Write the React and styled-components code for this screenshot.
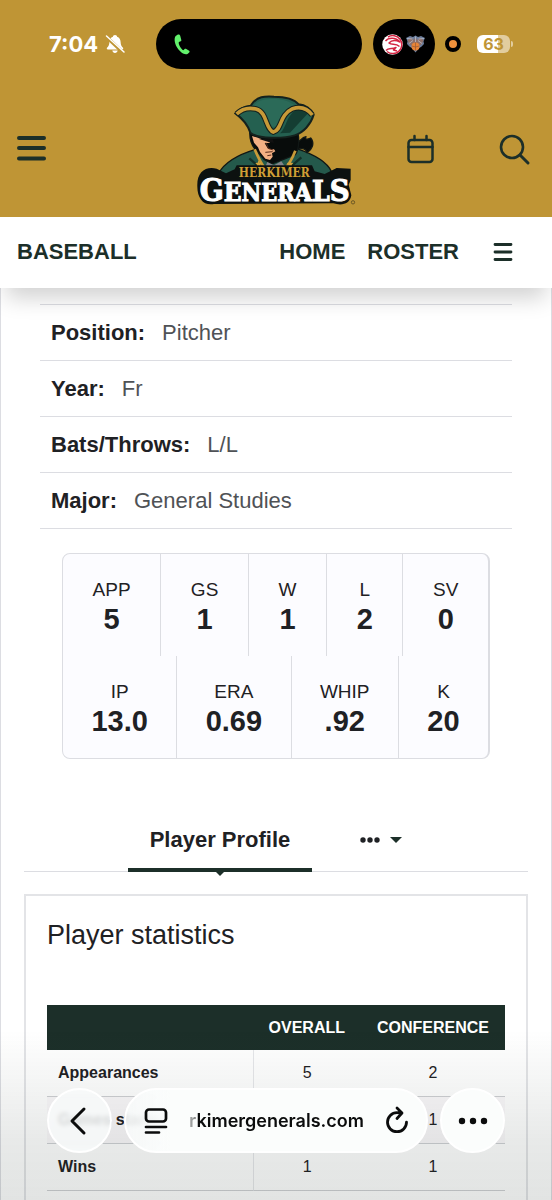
import React from "react";
import styled, { createGlobalStyle } from "styled-components";

const gold = "#bf9535";
const forest = "#1c2f29";
const line = "#dcdde2";
const ink = "#1f2124";

const GlobalStyle = createGlobalStyle`
  * { box-sizing: border-box; }
  body {
    margin: 0;
    background: #fff;
    color: ${ink};
    font-family: "Liberation Sans", Arial, sans-serif;
  }
  button, input { font: inherit; color: inherit; border: 0; background: none; padding: 0; }
  button { cursor: pointer; }
  a { color: inherit; text-decoration: none; }
  svg { display: block; overflow: visible; }
`;

const Page = styled.div`
  display: flex;
  flex-direction: column;
  min-height: 100vh;
`;

/* ---------- phone status bar ---------- */

const StatusBar = styled.div`
  display: flex;
  align-items: center;
  height: 50px;
  padding: 0 39px 0 49px;
  color: #fff;
  font-family: Inter, "Liberation Sans", sans-serif;
`;

const Clock = styled.div`
  flex: 1;
  display: flex;
  align-items: center;
  gap: 7px;
  font-size: 22px;
  font-weight: 700;
`;

const Island = styled.div`
  display: flex;
  align-items: center;
  justify-content: ${(p) => (p.$center ? "center" : "flex-start")};
  gap: 2px;
  width: ${(p) => p.$width}px;
  height: 50px;
  margin-right: ${(p) => p.$after}px;
  padding: ${(p) => (p.$center ? "0" : "0 18px")};
  border-radius: 25px;
  background: #000;
`;

const MicDot = styled.div`
  width: 16px;
  height: 16px;
  margin-right: 16px;
  border: 4px solid #000;
  border-radius: 50%;
  background: #f0913c;
`;

const Battery = styled.div`
  display: flex;
  align-items: center;
  gap: 1px;
`;

const BatteryBody = styled.div`
  width: 33px;
  height: 18px;
  border-radius: 6px;
  background: linear-gradient(90deg, #fff 63%, #e2cd9e 63%);
  color: ${gold};
  font-size: 16px;
  font-weight: 700;
  line-height: 18px;
  text-align: center;
`;

const BatteryTip = styled.div`
  width: 2px;
  height: 6px;
  border-radius: 0 2px 2px 0;
  background: #e2cd9e;
`;

/* ---------- site header ---------- */

const SiteHeader = styled.header`
  padding: 19px 0 11px;
  background: ${gold};
`;

const HeaderRow = styled.div`
  display: grid;
  grid-template-columns: 1fr auto 1fr;
  align-items: center;
  margin-top: 25px;
  padding: 0 15px;
`;

const HeaderActions = styled.div`
  display: flex;
  justify-content: flex-end;
  gap: 63px;
`;

const IconButton = styled.button`
  display: flex;
  justify-self: start;
  color: ${forest};
`;

const SportNav = styled.nav`
  position: relative;
  z-index: 1;
  display: flex;
  align-items: center;
  height: 71px;
  padding: 0 39px 2px 17px;
  background: #fff;
  box-shadow: 0 16px 22px -6px rgba(0, 0, 0, 0.18);
  color: ${forest};
  font-size: 22px;
  font-weight: 700;
`;

const NavLink = styled.a`
  margin-right: ${(p) => (p.$push ? "auto" : "22px")};
`;

const NavMore = styled(IconButton)`
  margin-left: 12px;
`;

/* ---------- player bio ---------- */

const Main = styled.main`
  flex: 1;
  display: flex;
  flex-direction: column;
  padding: 16px 23px 0;
  border: solid ${line};
  border-width: 0 1px;
`;

const Bio = styled.dl`
  margin: 0 16px;
  border-top: 1px solid ${line};
`;

const BioRow = styled.div`
  display: flex;
  align-items: center;
  gap: 17px;
  height: 56px;
  padding: 0 11px;
  border-bottom: 1px solid ${line};
  font-size: 22px;
`;

const BioLabel = styled.dt`
  font-weight: 700;
`;

const BioValue = styled.dd`
  margin: 0;
  color: #4f5256;
`;

const StatBox = styled.section`
  margin: 24px 38px 0;
  border: 1px solid ${line};
  border-right-width: 2px;
  border-radius: 8px;
  background: #fcfcff;
  overflow: hidden;
`;

const StatRow = styled.div`
  display: flex;
`;

const StatCell = styled.div`
  flex: 1 1 auto;
  height: 102px;
  padding: 24px 28px 0;
  text-align: center;
  & + & { border-left: 1px solid ${line}; }
`;

const StatLabel = styled.div`
  font-size: 19px;
  line-height: 24px;
`;

const StatValue = styled.div`
  font-size: 29px;
  font-weight: 700;
  line-height: 34px;
`;

/* ---------- tabs ---------- */

const Tabs = styled.div`
  display: flex;
  justify-content: center;
  gap: 26px;
  margin-top: 49px;
  border-bottom: 1px solid ${line};
`;

const Tab = styled.button`
  position: relative;
  display: flex;
  align-items: center;
  gap: 10px;
  height: 64px;
  margin-bottom: -1px;
  padding: 4px 22px 0;
  border-bottom: 4px solid ${(p) => (p.$active ? forest : "transparent")};
  font-size: 22px;
  font-weight: 700;
  white-space: nowrap;

  &::after {
    content: "";
    display: ${(p) => (p.$active ? "block" : "none")};
    position: absolute;
    top: 100%;
    left: 50%;
    margin: 3px 0 0 -5px;
    border: 5px solid transparent;
    border-top-color: ${forest};
    border-bottom-width: 0;
  }
`;

/* ---------- statistics ---------- */

const Panel = styled.section`
  flex: 1;
  margin-top: 22px;
  padding: 21px 21px 0;
  border: 2px solid #e3e4e7;
  border-bottom: 0;
`;

const PanelTitle = styled.h2`
  margin: 0 0 52px;
  font-size: 27px;
  font-weight: 400;
  line-height: 36px;
`;

const StatsTable = styled.table`
  width: 100%;
  border-collapse: separate;
  border-spacing: 0;
  font-size: 16px;

  th, td { height: 47px; padding: 0; border-bottom: 1px solid #cfd1d4; text-align: center; }
  td { border-left: 1px solid #e6e7ea; }
  td + td { border-left: 0; }
  tbody th { padding-left: 11px; text-align: left; white-space: nowrap; }
  tbody tr:nth-child(even) { background: #fbf9fb; }
  thead td, thead th {
    height: 45px;
    padding: 0 16px;
    border: 0;
    background: ${forest};
    color: #fff;
  }
  thead td { width: 100%; }
`;

/* ---------- browser toolbar ---------- */

const BottomShade = styled.div`
  position: fixed;
  inset: auto 0 0;
  z-index: 2;
  height: 170px;
  background: linear-gradient(rgba(30, 45, 38, 0), rgba(30, 45, 38, 0.1) 65%, rgba(30, 45, 38, 0.13));
  pointer-events: none;
`;

const BrowserBar = styled.div`
  position: fixed;
  inset: auto 0 47px;
  z-index: 3;
  display: flex;
  gap: 12px;
  padding: 0 47px;
  color: #0b0c0c;
`;

const RoundButton = styled.button`
  flex: none;
  display: flex;
  align-items: center;
  justify-content: center;
  width: 65px;
  height: 65px;
  border: 2px solid #fff;
  border-radius: 50%;
  background: ${(p) => (p.$clear ? "rgba(248, 250, 250, 0.84)" : "#fbfdfc")};
  backdrop-filter: blur(2px);
`;

const AddressPill = styled.div`
  flex: 1;
  min-width: 0;
  display: flex;
  align-items: center;
  gap: 20px;
  height: 65px;
  padding: 0 17px 0 18px;
  border: 2px solid #fff;
  border-radius: 33px;
  background: linear-gradient(90deg, rgba(248, 250, 250, 0.88), #fbfdfc 44px);
  backdrop-filter: blur(2px);
`;

const PillButton = styled.button`
  flex: none;
  display: flex;
`;

const AddressInput = styled.input`
  flex: 1;
  min-width: 0;
  height: 32px;
  outline: 0;
  font-family: Inter, "Liberation Sans", sans-serif;
  font-size: 18px;
  font-weight: 600;
  text-align: center;
  mask-image: linear-gradient(90deg, rgba(0, 0, 0, 0.3), rgba(0, 0, 0, 0.5) 8px, #000 10px);
`;

/* ---------- drawings ---------- */

const MutedBell = () => (
  <svg width="20" height="20" viewBox="0 0 20 20" fill="#fff" aria-hidden="true">
    <path d="M10 1C8.700 1 8 1.800 7.900 2.700C5.600 3.500 4.500 5.500 4.400 8C4.300 11 3.500 12.200 2 13.800C1.500 14.500 1.800 15.500 2.800 15.500H17.200C18.200 15.500 18.500 14.500 18 13.800C16.500 12.200 15.700 11 15.600 8C15.500 5.500 14.400 3.500 12.100 2.700C12 1.800 11.300 1 10 1Z" />
    <path d="M7.300 16.500h5.400c-.3 1.600-1.300 2.500-2.700 2.500s-2.400-.9-2.700-2.500Z" />
    <path d="M1.500 3 18 18.500" stroke={gold} strokeWidth="3.400" />
    <path d="M1.500 2 19 18" stroke="#fff" strokeWidth="1.500" strokeLinecap="round" />
  </svg>
);

const Phone = () => (
  <svg width="16" height="21" viewBox="0 0 16 21" fill="#62f16c" aria-hidden="true">
    <path d="M3.500.8 1.700 2C-.5 4.500 1 10.500 3.600 14.300C6.300 18.200 10.300 21.200 13.500 19.900L15.200 18.500C15.800 17.900 15.700 17.300 15.200 16.800L12.300 14.900C11.600 14.500 11.100 14.600 10.600 15.100L9.700 16C9.200 16.400 8.400 16 7.100 14.300C5.600 12.300 4.700 10.100 4.700 8.800C4.700 8.200 5 8 5.500 7.800L6.600 7.300C7.300 7 7.400 6.500 7.300 5.900L6.200 1.700C5.900.7 4.500.1 3.500.8Z" />
  </svg>
);

const HawksLogo = () => (
  <svg width="21" height="21" viewBox="0 0 42 42" aria-hidden="true">
    <circle cx="21" cy="21" r="20.500" fill="#fff" />
    <path d="M12 6A18 18 0 1 1 10 35" fill="none" stroke="#d32442" strokeWidth="3" />
    <path d="M7 14C13 7 27 6 36 16C28 12 19 12 14 18C19 23 27 18 35 25" fill="none" stroke="#d32442" strokeWidth="3" strokeLinejoin="round" />
    <path d="M8 33C13 27 20 31 28 27L23 32 30 34" fill="none" stroke="#d32442" strokeWidth="3" strokeLinejoin="round" />
  </svg>
);

const KnicksLogo = () => (
  <svg width="21" height="20" viewBox="0 0 42 40" aria-hidden="true">
    <path d="M2 8 10 4 16 6 21 3 26 6 32 4 40 8 37 14 38 20 32 26 28 28 21 37 14 28 10 26 4 20 5 14Z" fill="#6d7f9e" />
    <path d="M5 12 12 7 17 12 21 7 25 12 30 7 37 12 33 21 28 23 25 18H17L14 23 9 21Z" fill="#8d6f68" />
    <path d="M4 9 15 10M27 10 38 9M8 19 16 13M34 19 26 13M21 5V16" stroke="#b9c3d3" strokeWidth="1.500" />
    <circle cx="21" cy="25" r="8" fill="#e88435" />
    <path d="M21 17V33M13.500 24Q21 28 28.500 24" fill="none" stroke="#8c5236" strokeWidth="1.200" />
  </svg>
);

const GeneralsLogo = () => (
  <svg width="160" height="112" viewBox="18 12 480 336" role="img" aria-label="Herkimer Generals">
    <g stroke="#101715" strokeWidth="4" strokeLinejoin="round">
      <path d="M86 250C104 216 150 192 197 178L320 176C362 190 408 210 424 244L420 290H86Z" fill="#24594b" />
      <path d="M318 160C332 154 334 142 348 140C344 148 350 150 362 144C372 156 372 174 350 188C350 176 336 172 320 180Z" fill="#080c0b" />
      <path d="M180 118 318 116C330 136 328 176 316 194L286 206 246 222 222 208 194 176C180 158 178 138 180 118Z" fill="#080c0b" />
    </g>
    <path d="M186 138 206 144 220 149 238 152 240 158 224 160 234 176 252 178 256 184 246 190 248 200 240 210 226 206 210 186 204 172 192 158Z" fill="#f3b184" />
    <path d="M205 146 248 148 252 158 238 157 226 153Z" fill="#111" />
    <path d="M228 158 236 176 250 180M226 187 248 185M232 197 244 195" fill="none" stroke="#5a2c1b" strokeWidth="3" />
    <path d="M194 178C206 206 212 220 228 240M316 182C306 208 298 222 282 240" fill="none" stroke="#c79a38" strokeWidth="8" />
    <path d="M232 216 252 226 274 214 292 240H222Z" fill="#83848a" />
    <path d="M178 205 212 235M334 202 300 232" stroke="#122f27" strokeWidth="7" />
    <path d="m206 211 3 7 7 1-5 5 1 7-6-4-6 4 1-7-5-5 7-1ZM300 211l3 7 7 1-5 5 1 7-6-4-6 4 1-7-5-5 7-1Z" fill="#d2a23b" />
    <path d="M136 70C144 60 162 50 182 47C200 18 226 18 252 20C285 20 310 24 326 43C346 44 364 58 371 74C362 104 340 128 314 136C282 146 204 148 181 128C174 106 158 86 136 70Z" fill="#246050" stroke="#14211d" strokeWidth="6" />
    <path d="M190 50C202 30 222 27 248 27C280 27 300 34 316 48C292 52 278 66 270 88L262 110H240L230 84C222 66 208 53 190 50Z" fill="#2b6a58" />
    <path d="M316 60C330 54 344 58 354 70L300 128 270 130C290 112 286 84 316 60Z" fill="#143d32" />
    <path d="M140 72C154 58 176 52 198 57C232 66 226 118 250 126C278 118 266 76 308 56C334 48 354 58 367 75" fill="none" stroke="#14211d" strokeWidth="17" />
    <path d="M140 72C154 58 176 52 198 57C232 66 226 118 250 126C278 118 266 76 308 56C334 48 354 58 367 75" fill="none" stroke="#c79a38" strokeWidth="11" />
    <path d="M134 238 140 226 366 226 374 244 404 252 440 234 482 236 482 270 476 284 484 316C480 342 456 348 430 340L72 342C42 348 22 326 22 290C20 246 46 228 80 236L108 250Z" fill="#0c1110" />
    <g fontFamily="'DejaVu Serif Condensed', 'DejaVu Serif', serif" fontWeight="700" textAnchor="middle">
      <text x="253" y="260" fontSize="36" fill="#d09f35">HERKIMER</text>
      <text x="254" y="333" fill="#fff" stroke="#fff" strokeWidth="3" fontSize="74">
        <tspan fontSize="94">G</tspan>
        <tspan fontSize="78">E</tspan>
        <tspan fontSize="72">N</tspan>
        <tspan fontSize="70">E</tspan>
        <tspan fontSize="70">R</tspan>
        <tspan fontSize="74">A</tspan>
        <tspan fontSize="84">L</tspan>
        <tspan fontSize="92">S</tspan>
      </text>
    </g>
    <circle cx="489" cy="337" r="5" fill="none" stroke="#5c4a20" strokeWidth="2.500" />
  </svg>
);

const MenuIcon = () => (
  <svg width="32" height="32" viewBox="0 0 32 32" fill="none" stroke="currentColor" strokeWidth="4" strokeLinecap="round">
    <path d="M4 4h25M4 14h25M4 24.500h25" />
  </svg>
);

const CalendarIcon = () => (
  <svg width="32" height="32" viewBox="0 0 32 32" fill="none" stroke="currentColor" strokeWidth="2.500" strokeLinecap="round">
    <rect x="4.500" y="6" width="24" height="22" rx="3" />
    <path d="M4.500 13h24M10.500 2v4M22.500 2v4" />
  </svg>
);

const SearchIcon = () => (
  <svg width="38" height="32" viewBox="0 0 38 32" fill="none" stroke="currentColor" strokeWidth="2.600" strokeLinecap="round">
    <circle cx="13" cy="13" r="11" />
    <path d="m21 21 8 8" strokeWidth="3" />
  </svg>
);

const NavMenuIcon = () => (
  <svg width="20" height="18" viewBox="0 0 20 18" fill="none" stroke="currentColor" strokeWidth="2.800" strokeLinecap="round">
    <path d="M2 1.500h16M2 9h16M2 16.500h16" />
  </svg>
);

const Dots = ({ width, r, gap }) => (
  <svg width={width} height="10" viewBox={`${-width / 2} -5 ${width} 10`} fill="currentColor">
    <circle cx={-gap} r={r} />
    <circle r={r} />
    <circle cx={gap} r={r} />
  </svg>
);

const Caret = () => (
  <svg width="12" height="8" viewBox="0 0 12 8" fill={forest}>
    <path d="M0 1h12L6 7Z" />
  </svg>
);

const BackIcon = () => (
  <svg width="20" height="28" viewBox="0 0 20 28" fill="none" stroke="currentColor" strokeWidth="3" strokeLinecap="round" strokeLinejoin="round">
    <path d="M14 2 2 14l12 12" />
  </svg>
);

const PageIcon = () => (
  <svg width="24" height="26" viewBox="0 0 24 26" fill="none" stroke="currentColor" strokeWidth="2.700" strokeLinecap="round">
    <rect x="2" y="1.500" width="20" height="12" rx="3" />
    <path d="M2 19h20M2 24.500h13" />
  </svg>
);

const ReloadIcon = () => (
  <svg width="24" height="28" viewBox="0 0 24 28" fill="none" stroke="currentColor" strokeWidth="2.800" strokeLinecap="round" strokeLinejoin="round">
    <path d="M16 6.500C14.800 6 13.500 5.700 12 5.700A9.500 9.500 0 1 0 21.500 15.200M12 1l5 5-5 5.500" />
  </svg>
);

/* ---------- data ---------- */

const bio = [
  ["Position:", "Pitcher"],
  ["Year:", "Fr"],
  ["Bats/Throws:", "L/L"],
  ["Major:", "General Studies"],
];

const highlights = [
  [["APP", "5"], ["GS", "1"], ["W", "1"], ["L", "2"], ["SV", "0"]],
  [["IP", "13.0"], ["ERA", "0.69"], ["WHIP", ".92"], ["K", "20"]],
];

const statistics = [
  ["Appearances", 5, 2],
  ["Games started", 1, 1],
  ["Wins", 1, 1],
];

export default function App() {
  return (
    <Page>
      <GlobalStyle />
      <SiteHeader>
        <StatusBar>
          <Clock>
            7:04
            <MutedBell />
          </Clock>
          <Island $width={206} $after={11}>
            <Phone />
          </Island>
          <Island $width={62} $after={10} $center>
            <HawksLogo />
            <KnicksLogo />
          </Island>
          <MicDot />
          <Battery>
            <BatteryBody>63</BatteryBody>
            <BatteryTip />
          </Battery>
        </StatusBar>
        <HeaderRow>
          <IconButton aria-label="Menu"><MenuIcon /></IconButton>
          <a href="#home"><GeneralsLogo /></a>
          <HeaderActions>
            <IconButton aria-label="Calendar"><CalendarIcon /></IconButton>
            <IconButton aria-label="Search"><SearchIcon /></IconButton>
          </HeaderActions>
        </HeaderRow>
      </SiteHeader>

      <SportNav>
        <NavLink href="#baseball" $push>BASEBALL</NavLink>
        <NavLink href="#home">HOME</NavLink>
        <NavLink href="#roster">ROSTER</NavLink>
        <NavMore aria-label="More baseball pages"><NavMenuIcon /></NavMore>
      </SportNav>

      <Main>
        <Bio>
          {bio.map(([label, value]) => (
            <BioRow key={label}>
              <BioLabel>{label}</BioLabel>
              <BioValue>{value}</BioValue>
            </BioRow>
          ))}
        </Bio>

        <StatBox>
          {highlights.map((row, i) => (
            <StatRow key={i}>
              {row.map(([label, value]) => (
                <StatCell key={label}>
                  <StatLabel>{label}</StatLabel>
                  <StatValue>{value}</StatValue>
                </StatCell>
              ))}
            </StatRow>
          ))}
        </StatBox>

        <Tabs role="tablist">
          <Tab role="tab" aria-selected="true" $active>Player Profile</Tab>
          <Tab role="tab" aria-selected="false" aria-label="More tabs">
            <Dots width={20} r={2.7} gap={7} />
            <Caret />
          </Tab>
        </Tabs>

        <Panel role="tabpanel">
          <PanelTitle>Player statistics</PanelTitle>
          <StatsTable>
            <thead>
              <tr>
                <td />
                <th scope="col">OVERALL</th>
                <th scope="col">CONFERENCE</th>
              </tr>
            </thead>
            <tbody>
              {statistics.map(([name, overall, conference]) => (
                <tr key={name}>
                  <th scope="row">{name}</th>
                  <td>{overall}</td>
                  <td>{conference}</td>
                </tr>
              ))}
            </tbody>
          </StatsTable>
        </Panel>
      </Main>

      <BottomShade />
      <BrowserBar>
        <RoundButton aria-label="Back" $clear><BackIcon /></RoundButton>
        <AddressPill>
          <PillButton aria-label="Page menu"><PageIcon /></PillButton>
          <AddressInput aria-label="Address" readOnly value="rkimergenerals.com" />
          <PillButton aria-label="Reload"><ReloadIcon /></PillButton>
        </AddressPill>
        <RoundButton aria-label="More"><Dots width={30} r={3.2} gap={11} /></RoundButton>
      </BrowserBar>
    </Page>
  );
}
